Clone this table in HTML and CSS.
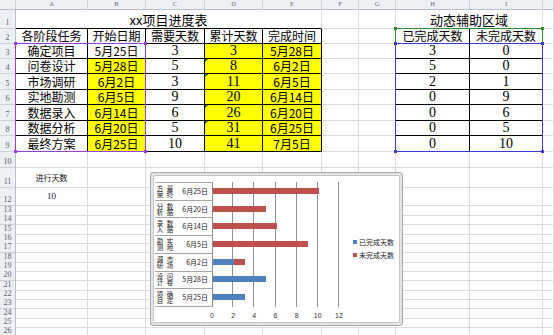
FILE: index.html
```html
<!DOCTYPE html>
<html lang="zh">
<head>
<meta charset="utf-8">
<title>xx项目进度表</title>
<link rel="stylesheet" href="styles.css">
</head>
<body>
<div class="sheet">
  <div class="row h0"><div></div><div>A</div><div>B</div><div>C</div><div>D</div><div>E</div><div>F</div><div>G</div><div>H</div><div>I</div><div></div></div>
  <div class="row h19"><div class="rh">1</div><div class="title">xx项目进度表</div><div></div><div></div><div class="title title2">动态辅助区域</div><div></div></div>
  <div class="row h15"><div class="rh">2</div><div class="k">各阶段任务</div><div class="k">开始日期</div><div class="k">需要天数</div><div class="k">累计天数</div><div class="k">完成时间</div><div></div><div class="kl"></div><div class="k">已完成天数</div><div class="k">未完成天数</div><div></div></div>
  <div class="row h15"><div class="rh">3</div><div class="k">确定项目</div><div class="k d">5月25日</div><div class="k n">3</div><div class="k n y">3</div><div class="k d y">5月28日</div><div></div><div class="kl"></div><div class="k n">3</div><div class="k n">0</div><div></div></div>
  <div class="row h15"><div class="rh">4</div><div class="k">问卷设计</div><div class="k d y">5月28日</div><div class="k n">5</div><div class="k n y err">8</div><div class="k d y">6月2日</div><div></div><div class="kl"></div><div class="k n">5</div><div class="k n">0</div><div></div></div>
  <div class="row h16"><div class="rh">5</div><div class="k">市场调研</div><div class="k d y">6月2日</div><div class="k n">3</div><div class="k n y err">11</div><div class="k d y">6月5日</div><div></div><div class="kl"></div><div class="k n">2</div><div class="k n">1</div><div></div></div>
  <div class="row h15"><div class="rh">6</div><div class="k">实地勘测</div><div class="k d y">6月5日</div><div class="k n">9</div><div class="k n y">20</div><div class="k d y">6月14日</div><div></div><div class="kl"></div><div class="k n">0</div><div class="k n">9</div><div></div></div>
  <div class="row h16"><div class="rh">7</div><div class="k">数据录入</div><div class="k d y">6月14日</div><div class="k n">6</div><div class="k n y err">26</div><div class="k d y">6月20日</div><div></div><div class="kl"></div><div class="k n">0</div><div class="k n">6</div><div></div></div>
  <div class="row h15"><div class="rh">8</div><div class="k">数据分析</div><div class="k d y">6月20日</div><div class="k n">5</div><div class="k n y err">31</div><div class="k d y">6月25日</div><div></div><div class="kl"></div><div class="k n">0</div><div class="k n">5</div><div></div></div>
  <div class="row h16"><div class="rh">9</div><div class="k">最终方案</div><div class="k d y">6月25日</div><div class="k n">10</div><div class="k n y">41</div><div class="k d y">7月5日</div><div></div><div class="kl"></div><div class="k n">0</div><div class="k n">10</div><div></div></div>
  <div class="row h16"><div class="rh">10</div><div></div><div></div><div></div><div></div><div></div><div></div><div></div><div></div><div></div><div></div></div>
  <div class="row h20"><div class="rh">11</div><div class="s">进行天数</div><div></div><div></div><div></div><div></div><div></div><div></div><div></div><div></div><div></div></div>
  <div class="row h18"><div class="rh">12</div><div class="s sn">10</div><div></div><div></div><div></div><div></div><div></div><div></div><div></div><div></div><div></div></div>
  <div class="row"><div class="rh">13</div><div></div><div></div><div></div><div></div><div></div><div></div><div></div><div></div><div></div><div></div></div>
  <div class="row"><div class="rh">14</div><div></div><div></div><div></div><div></div><div></div><div></div><div></div><div></div><div></div><div></div></div>
  <div class="row"><div class="rh">15</div><div></div><div></div><div></div><div></div><div></div><div></div><div></div><div></div><div></div><div></div></div>
  <div class="row"><div class="rh">16</div><div></div><div></div><div></div><div></div><div></div><div></div><div></div><div></div><div></div><div></div></div>
  <div class="row"><div class="rh">17</div><div></div><div></div><div></div><div></div><div></div><div></div><div></div><div></div><div></div><div></div></div>
  <div class="row"><div class="rh">18</div><div></div><div></div><div></div><div></div><div></div><div></div><div></div><div></div><div></div><div></div></div>
  <div class="row"><div class="rh">19</div><div></div><div></div><div></div><div></div><div></div><div></div><div></div><div></div><div></div><div></div></div>
  <div class="row"><div class="rh">20</div><div></div><div></div><div></div><div></div><div></div><div></div><div></div><div></div><div></div><div></div></div>
  <div class="row"><div class="rh">21</div><div></div><div></div><div></div><div></div><div></div><div></div><div></div><div></div><div></div><div></div></div>
  <div class="row"><div class="rh">22</div><div></div><div></div><div></div><div></div><div></div><div></div><div></div><div></div><div></div><div></div></div>
  <div class="row"><div class="rh">23</div><div></div><div></div><div></div><div></div><div></div><div></div><div></div><div></div><div></div><div></div></div>
  <div class="row"><div class="rh">24</div><div></div><div></div><div></div><div></div><div></div><div></div><div></div><div></div><div></div><div></div></div>
  <div class="row"><div class="rh">25</div><div></div><div></div><div></div><div></div><div></div><div></div><div></div><div></div><div></div><div></div></div>
  <div class="row"><div class="rh">26</div><div></div><div></div><div></div><div></div><div></div><div></div><div></div><div></div><div></div><div></div></div>
</div>

<div class="sel purple"><i></i><i></i><i></i><i></i></div>
<div class="sel green"><i></i><i></i></div>
<div class="sel blue"><i></i><i></i><i></i><i></i></div>

<div class="chart">
  <div class="chart-in">
    <div class="axes">
      <div class="plotwrap">
        <div class="cats">
          <div class="cat"><span class="task">最终方案</span><span class="date">6月25日</span></div>
          <div class="cat"><span class="task">数据分析</span><span class="date">6月20日</span></div>
          <div class="cat"><span class="task">数据录入</span><span class="date">6月14日</span></div>
          <div class="cat"><span class="task">实地勘测</span><span class="date">6月5日</span></div>
          <div class="cat"><span class="task">市场调研</span><span class="date">6月2日</span></div>
          <div class="cat"><span class="task">问卷设计</span><span class="date">5月28日</span></div>
          <div class="cat"><span class="task">确定项目</span><span class="date">5月25日</span></div>
        </div>
        <div class="plot">
          <div class="bar-row"><span class="r" style="width:105.8px"></span></div>
          <div class="bar-row"><span class="r" style="width:52.9px"></span></div>
          <div class="bar-row"><span class="r" style="width:63.5px"></span></div>
          <div class="bar-row"><span class="r" style="width:95.2px"></span></div>
          <div class="bar-row"><span class="b" style="width:21.2px"></span><span class="r" style="width:10.6px"></span></div>
          <div class="bar-row"><span class="b" style="width:52.9px"></span></div>
          <div class="bar-row"><span class="b" style="width:31.7px"></span></div>
        </div>
      </div>
      <div class="xl"><span>0</span><span>2</span><span>4</span><span>6</span><span>8</span><span>10</span><span>12</span></div>
    </div>
    <div class="legend">
      <div><i class="b"></i>已完成天数</div>
      <div><i class="r"></i>未完成天数</div>
    </div>
  </div>
</div>
</body>
</html>
```
FILE: styles.css
```css
* { box-sizing: border-box; margin: 0; padding: 0; }
html, body { width: 554px; height: 335px; overflow: hidden; background: #fff; }
body { position: relative; font-family: "Noto Sans CJK SC", "Noto Sans", sans-serif; color: #000; }

.sheet { display: flex; flex-direction: column; width: 554px; }
.row {
  display: grid;
  grid-template-columns: 16px 72px 58px 59px 58px 59px 37px 37px 74px 73px 1fr;
  height: 9.33px;
  flex: none;
}
.row > div {
  display: flex; align-items: center; justify-content: center;
  white-space: nowrap; position: relative; min-width: 0;
  border-right: 1px solid #dadcdd; border-bottom: 1px solid #dadcdd;
  line-height: 1;
}
.h0 { height: 10px; }
.h15 { height: 15px; }
.h16 { height: 16px; }
.h18 { height: 18px; }
.h19 { height: 19px; }
.h20 { height: 20px; }

.row > .rh {
  background: #eceff3; color: #5c6470;
  border-right-color: #b9c0ca; border-bottom-color: #cdd2d9;
  font: 8px/1 "Liberation Serif", serif;
  align-items: flex-end; padding-bottom: 1px;
}
.h0 > div {
  background: #eceff3; color: #6a717c;
  font: 6.5px/1 "Liberation Serif", serif;
}
.row.h0 > div { border-right-color: #cdd2d9; border-bottom-color: #b9c0ca; }

.row > .title { grid-column: span 5; font-size: 13px; border-bottom-color: #000; }
.row > .title2 { grid-column: span 2; }
.row > .k { border-right-color: #000; border-bottom-color: #000; font-size: 12px; }
.row > .k.n { font-family: "Liberation Serif", serif; font-size: 14px; }
.row > .k.d { font-size: 12px; }
.row > .kl { border-right-color: #000; }
.y { background: #ffff00; }
.err::before {
  content: ""; position: absolute; left: 0; top: 0;
  border-top: 3px solid #0b6b0b; border-right: 3px solid transparent;
}
.row > .s { font-size: 8px; color: #111; }
.row > .s.sn { font: 9px/1 "Liberation Serif", serif; }

/* chart source range highlights */
.sel { position: absolute; border: 1px solid currentColor; pointer-events: none; }
.sel i { position: absolute; width: 3px; height: 3px; background: currentColor; }
.sel i:nth-child(1) { left: -2px; top: -2px; }
.sel i:nth-child(2) { right: -2px; top: -2px; }
.sel i:nth-child(3) { left: -2px; bottom: -2px; }
.sel i:nth-child(4) { right: -2px; bottom: -2px; }
.purple { color: #9b3fcf; left: 15px; top: 43px; width: 131px; height: 109px; }
.green { color: #2e8b2e; left: 395px; top: 28px; width: 148px; height: 16px; }
.blue { color: #3b3bd0; left: 395px; top: 43px; width: 148px; height: 109px; }

/* chart */
.chart {
  position: absolute; left: 150px; top: 172px; width: 253px; height: 154px;
  border: 1px solid #a9a9a9; border-radius: 3px; background: #e3e3e3; padding: 2px;
}
.chart-in {
  height: 100%; background: #fff; border: 1px solid #c6c6c6; border-radius: 2px;
  display: flex; padding: 6px 0 0 1px;
}
.axes { display: flex; flex-direction: column; width: 185px; flex: none; }
.plotwrap { display: flex; }
.cats { width: 57px; border-bottom: 1px solid #a6a6a6; flex: none; }
.cat { height: 17.71px; border-top: 1px solid #a6a6a6; display: flex; align-items: center; }
.task {
  writing-mode: vertical-rl; height: 13px; width: 20px;
  font-size: 6.5px; line-height: 10px; color: #222; white-space: normal;
}
.date { flex: 1; text-align: right; padding-right: 4px; font-size: 7px; line-height: 1; color: #222; }
.plot {
  width: 128px; flex: none; border-left: 1px solid #8c8c8c;
  background: repeating-linear-gradient(to right, transparent 0 20.17px, #8f8f8f 20.17px 21.17px);
  background-origin: border-box;
}
.bar-row { height: 17.71px; display: flex; align-items: center; }
.bar-row span { height: 6px; display: block; }
.b { background: #4f81bd; }
.r { background: #c0504d; }
.xl { display: flex; margin-left: 46.4px; margin-right: -10.6px; margin-top: 5px; }
.xl span { width: 21.17px; text-align: center; font: 7px/1 "Liberation Sans", sans-serif; color: #333; flex: none; }
.legend { margin: 54px 0 0 13px; font-size: 7px; color: #222; }
.legend div { display: flex; align-items: center; height: 12.5px; gap: 2px; white-space: nowrap; }
.legend i { width: 4px; height: 4px; display: block; }
```
